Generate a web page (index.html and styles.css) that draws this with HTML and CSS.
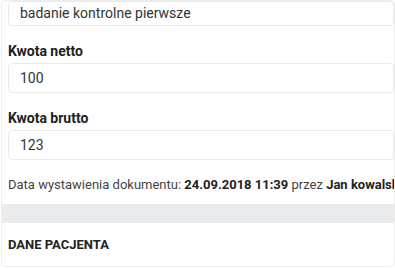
FILE: index.html
```html
<!DOCTYPE html>
<html lang="pl">
<head>
<meta charset="utf-8">
<link rel="stylesheet" href="styles.css">
</head>
<body>
<div class="card">
  <div class="card-body">
    <div class="group">
      <div class="input input-first">badanie kontrolne pierwsze</div>
    </div>
    <div class="group">
      <label class="label">Kwota netto</label>
      <div class="input">100</div>
    </div>
    <div class="group">
      <label class="label">Kwota brutto</label>
      <div class="input">123</div>
    </div>
    <p class="meta">Data wystawienia dokumentu: <b>24.09.2018 11:39</b> przez <b>Jan kowalski</b></p>
  </div>
  <div class="band"></div>
  <div class="section-head">DANE PACJENTA</div>
</div>
</body>
</html>
```
FILE: styles.css
```css
html, body {
  margin: 0;
  padding: 0;
  background: #fff;
  overflow: hidden;
}
body {
  font-family: Roboto, "Liberation Sans", sans-serif;
  font-size: 14px;
  color: #2b2b2b;
}
.card {
  margin-left: 1px;
  width: 394px;
  box-sizing: border-box;
  border: 1px solid #ededed;
  border-radius: 4px;
  background: #fff;
}
.card-body {
  padding: 0 0 9px 6px;
}
.group {
  margin-bottom: 17px;
}
.label {
  display: block;
  font-weight: 700;
  line-height: 16px;
  margin-bottom: 4px;
  color: #222;
}
.input {
  box-sizing: border-box;
  height: 30px;
  line-height: 28px;
  border: 1px solid #ebebeb;
  border-radius: 4px;
  padding-left: 11px;
  color: #333;
  white-space: nowrap;
  overflow: hidden;
}
.input-first {
  height: 25px;
  line-height: 23px;
}
.meta {
  margin: -2px 0 0;
  font-size: 13px;
  line-height: 20px;
  white-space: nowrap;
  overflow: hidden;
  color: #444;
}
.meta b {
  color: #222;
  font-weight: 700;
}
.band {
  height: 19px;
  background: #e9ebec;
}
.section-head {
  padding: 12px 7px 12px 6px;
  font-size: 13px;
  line-height: 19px;
  font-weight: 700;
  color: #222;
}
```
